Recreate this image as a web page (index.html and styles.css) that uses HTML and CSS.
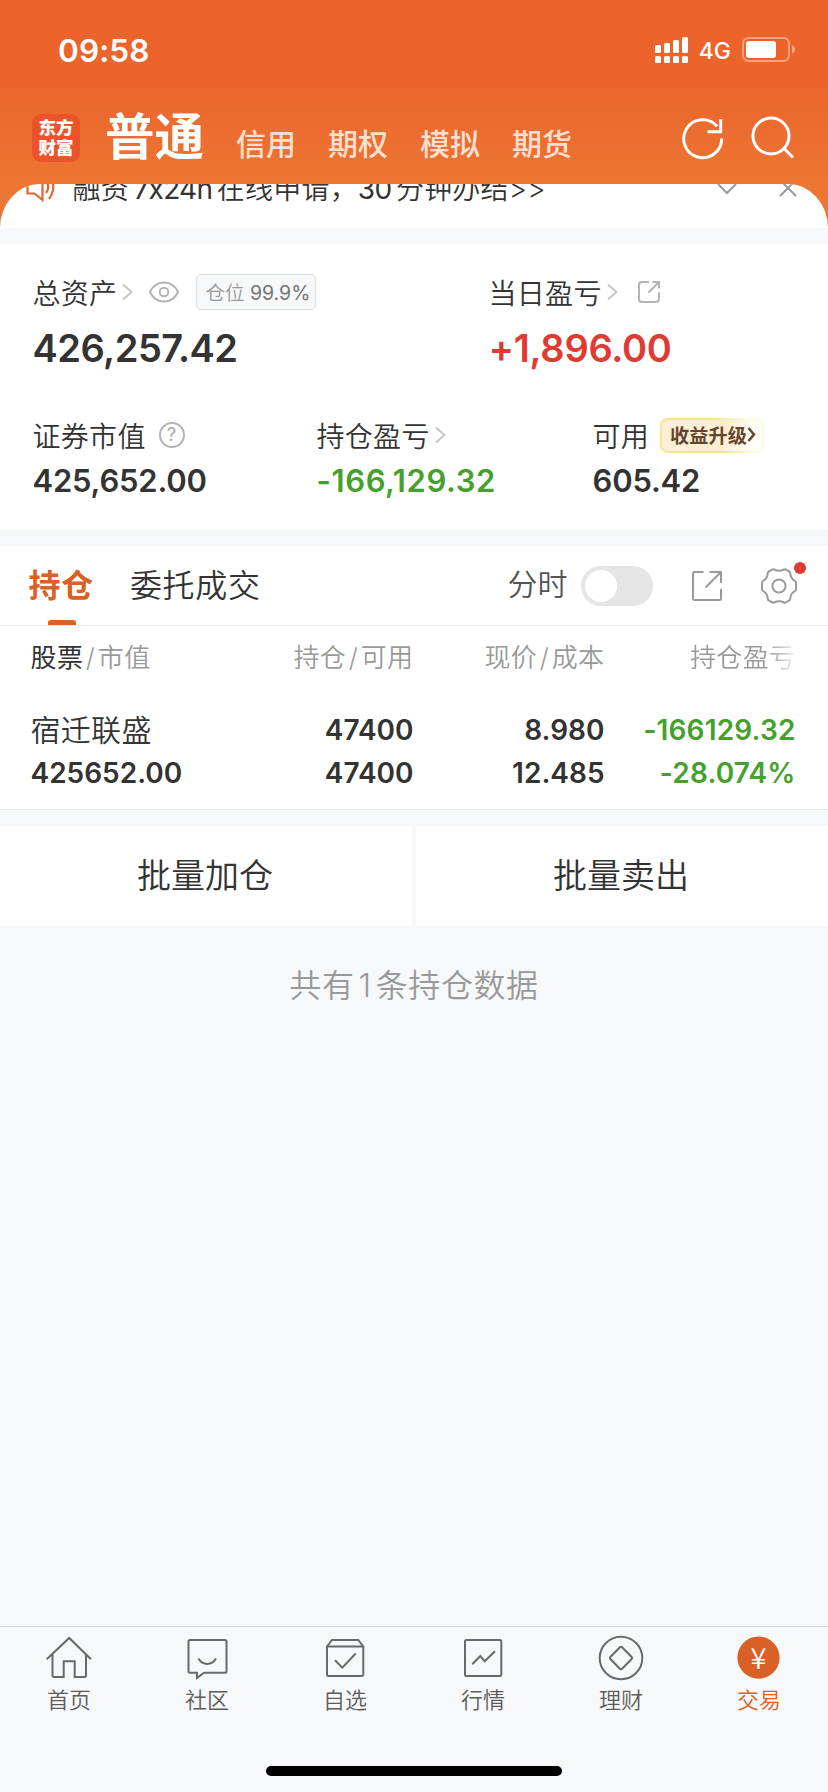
FILE: index.html
```html
<!DOCTYPE html>
<html lang="zh-CN">
<head>
<meta charset="utf-8">
<title>普通交易</title>
<link rel="stylesheet" href="styles.css">
</head>
<body>
<div class="app">
  <header class="header">
    <div class="status">
      <span class="time">09:58</span>
      <div class="status-right">
        <svg class="signal" width="34" height="27" viewBox="0 0 34 27" fill="#fff">
          <rect x="0" y="8" width="6" height="8" rx="1.5"/><rect x="9" y="6" width="6" height="10" rx="1.5"/><rect x="18" y="3" width="6" height="13" rx="1.5"/><rect x="27" y="0" width="6" height="16" rx="1.5"/>
          <rect x="0" y="19" width="6" height="7" rx="1.5"/><rect x="9" y="19" width="6" height="7" rx="1.5"/><rect x="18" y="19" width="6" height="7" rx="1.5"/><rect x="27" y="19" width="6" height="7" rx="1.5"/>
        </svg>
        <span class="network">4G</span>
        <svg width="54" height="26" viewBox="0 0 54 26">
          <rect x="1" y="1" width="46" height="23" rx="5.5" fill="none" stroke="#fff" stroke-opacity=".4" stroke-width="2"/>
          <rect x="4" y="4" width="30" height="17" rx="3" fill="#fff"/>
          <path d="M50 8.5c4 1 4 7 0 8z" fill="#fff" fill-opacity=".45"/>
        </svg>
      </div>
    </div>
    <div class="titlebar">
      <div class="logo"><span>东方</span><span>财富</span></div>
      <nav class="accounts">
        <b class="current">普通</b><span>信用</span><span>期权</span><span>模拟</span><span>期货</span>
      </nav>
      <div class="actions">
        <svg width="46" height="46" viewBox="0 0 46 46" fill="none" stroke="#fff" stroke-width="3"><path d="M41.700 22.500A19 19 0 1 1 37 10.200M40.700 3v12.700H27.500"/></svg>
        <svg width="46" height="46" viewBox="0 0 46 46" fill="none" stroke="#fff" stroke-width="3"><circle cx="20" cy="20" r="18"/><path d="M33 32.5l9 9"/></svg>
      </div>
    </div>
  </header>
  <div class="notice">
    <div class="notice-row">
      <svg class="horn" width="30" height="32" viewBox="0 0 30 32" fill="none" stroke="#e0662f" stroke-width="2.2"><path d="M1.5 10h7L16.5 3v26L8.5 22.500h-7zM20 10q4.500 6 0 12M23 4q8.500 12 0 24"/></svg>
      <span class="notice-text">融资<i class="latin">7x24h</i>在线申请，<i class="latin flush">30</i>分钟办结&gt;&gt;</span>
      <svg class="down" width="20" height="12" viewBox="0 0 20 12" fill="none" stroke="#999" stroke-width="2"><path d="M1 1l9 9 9-9"/></svg>
      <svg width="18" height="18" viewBox="0 0 18 18" fill="none" stroke="#999" stroke-width="2"><path d="M1 1l16 16M17 1L1 17"/></svg>
    </div>
  </div>

  <section class="assets">
    <div class="row main">
      <div class="cell">
        <div class="label"><span>总资产</span>
          <svg class="chev" width="11" height="18" viewBox="0 0 11 18"><path d="M1 1.500L9.500 9 1 16.500"/></svg>
          <svg class="eye" width="32" height="22" viewBox="0 0 32 22" fill="none" stroke="#b4b4b4" stroke-width="2"><path d="M2 11C8 -1.700 24 -1.700 30 11C24 23.700 8 23.700 2 11z"/><circle cx="16" cy="11" r="4.300"/></svg>
          <span class="ratio">仓位 <em>99.9%</em></span>
        </div>
        <div class="value big">426,257.42</div>
      </div>
      <div class="cell">
        <div class="label"><span>当日盈亏</span>
          <svg class="chev" width="11" height="18" viewBox="0 0 11 18"><path d="M1 1.500L9.500 9 1 16.500"/></svg>
          <svg class="share" width="24" height="24" viewBox="0 0 24 24" fill="none" stroke="#b4b4b4" stroke-width="2"><path d="M12 2H5a3 3 0 0 0-3 3v14a3 3 0 0 0 3 3h14a3 3 0 0 0 3-3v-7M15.500 2H22v6.500M22 2L11.500 12.500"/></svg>
        </div>
        <div class="value big up">+1,896.00</div>
      </div>
    </div>
    <div class="row sub">
      <div class="cell">
        <div class="label"><span>证券市值</span><span class="help">?</span></div>
        <div class="value">425,652.00</div>
      </div>
      <div class="cell">
        <div class="label"><span>持仓盈亏</span><svg class="chev" width="11" height="18" viewBox="0 0 11 18"><path d="M1 1.500L9.500 9 1 16.500"/></svg></div>
        <div class="value down-num loose">-166,129.32</div>
      </div>
      <div class="cell">
        <div class="label"><span>可用</span><span class="promo">收益升级<svg width="9" height="15" viewBox="0 0 9 15" fill="none" stroke="#65452e" stroke-width="2.500"><path d="M1.500 1L7 7.500 1.500 14"/></svg></span></div>
        <div class="value">605.42</div>
      </div>
    </div>
  </section>

  <section class="holdings">
    <div class="tabs">
      <span class="tab on">持仓</span>
      <span class="tab">委托成交</span>
      <div class="tools">
        <span class="minute">分时</span>
        <span class="switch"></span>
        <svg class="export" width="32" height="32" viewBox="0 0 32 32" fill="none" stroke="#999" stroke-width="2"><path d="M12.500 2H3.500A1.500 1.500 0 0 0 2 3.500v25A1.500 1.500 0 0 0 3.500 30h25a1.500 1.500 0 0 0 1.500-1.500V19M18.500 2H30v11M30 2L14.500 17.500"/></svg>
        <span class="gear">
          <svg width="38" height="38" viewBox="0 0 38 38" fill="none" stroke="#999" stroke-width="2" stroke-linejoin="round"><path d="M8.700 4.700L12.600 2.400Q13.500 1.900 14.400 2.600Q19 5 23.600 2.600Q24.500 1.900 25.400 2.400L29.300 4.700Q30.200 5.300 30.200 6.300Q30.500 11.500 35 14Q36 14.700 36 15.700V22.300Q36 23.300 35 24Q30.500 26.500 30.200 31.700Q30.200 32.700 29.300 33.300L25.400 35.600Q24.500 36.100 23.600 35.400Q19 33 14.400 35.400Q13.500 36.100 12.600 35.600L8.700 33.300Q7.800 32.700 7.800 31.700Q7.500 26.500 3 24Q2 23.300 2 22.300V15.700Q2 14.700 3 14Q7.500 11.500 7.800 6.300Q7.800 5.300 8.700 4.700Z"/><circle cx="19" cy="19" r="6.600"/></svg>
          <i class="dot"></i>
        </span>
      </div>
    </div>
    <div class="table head">
      <span><b>股票</b><s>/</s>市值</span><span>持仓<s>/</s>可用</span><span>现价<s>/</s>成本</span><span class="fade">持仓盈亏</span>
    </div>
    <div class="table body">
      <span class="name">宿迁联盛</span><span>47400</span><span>8.980</span><span class="down-num">-166129.32</span>
      <span>425652.00</span><span>47400</span><span>12.485</span><span class="down-num">-28.074%</span>
    </div>
  </section>

  <div class="batch"><span>批量加仓</span><span>批量卖出</span></div>
  <p class="summary">共有<i class="num">1</i>条持仓数据</p>

  <footer class="tabbar">
    <nav class="nav">
      <div class="item"><svg width="48" height="48" viewBox="0 0 48 48"><path d="M1.700 26.300L24.200 5 46 26.300M7.500 21.500V42.500a1.500 1.500 0 0 0 1.500 1.500h9.700V28.200h11V44h9.800a1.500 1.500 0 0 0 1.500-1.500V21.500"/></svg><span>首页</span></div>
      <div class="item"><svg width="48" height="48" viewBox="0 0 48 48"><path d="M7 7h35a1.500 1.500 0 0 1 1.500 1.500v29.700a1.500 1.500 0 0 1-1.500 1.500H21l-7 5.300v-5.300H7a1.500 1.500 0 0 1-1.500-1.500V8.500A1.500 1.500 0 0 1 7 7zM15.400 25.500c4.300 7.200 13.300 7.200 17.600 0"/></svg><span>社区</span></div>
      <div class="item"><svg width="48" height="48" viewBox="0 0 48 48"><path d="M6 13.500h36.300V41.500a1.500 1.500 0 0 1-1.500 1.500H7.500A1.500 1.500 0 0 1 6 41.500zL11 7H37.300L42.300 13.500M14 27.300l7.300 7.300L34.700 20.500"/></svg><span>自选</span></div>
      <div class="item"><svg width="48" height="48" viewBox="0 0 48 48"><rect x="6" y="7" width="36.300" height="36" rx="1.500"/><path d="M13.300 31.300L21.300 23l4.400 5.300L36 18.300"/></svg><span>行情</span></div>
      <div class="item"><svg width="48" height="48" viewBox="0 0 48 48"><circle cx="24" cy="25" r="21.300"/><rect x="15.700" y="16.700" width="16.600" height="16.600" rx="1.500" transform="rotate(45 24 25)"/></svg><span>理财</span></div>
      <div class="item active"><svg width="48" height="48" viewBox="0 0 48 48"><circle class="coin" cx="23.500" cy="24.600" r="21.100"/><text x="23.500" y="35.500" text-anchor="middle">¥</text></svg><span>交易</span></div>
    </nav>
    <div class="home-indicator"></div>
  </footer>
</div>
</body>
</html>
```
FILE: styles.css
```css
* { box-sizing: border-box; }
body {
  margin: 0;
  font-family: Inter, "Noto Sans CJK SC", sans-serif;
  color: #333;
  background: #f7f8fa;
}
i, em { font-style: normal; }
s { text-decoration: none; }
svg { flex: none; display: block; }
.app { width: 828px; height: 1792px; display: flex; flex-direction: column; overflow: hidden; }

.header {
  height: 184px;
  flex: none;
  color: #fff;
  background: linear-gradient(#ec632b 0, #ec632b 74px, #ec7633 184px);
}
.status { height: 100px; padding: 0 32px 0 58px; display: flex; align-items: center; justify-content: space-between; }
.time { font-size: 31.500px; font-weight: 600; letter-spacing: .1px; }
.status-right { display: flex; align-items: center; }
.network { font-size: 23px; font-weight: 500; margin: 2px 11px 0 10px; }
.titlebar { height: 84px; padding: 0 31px 0 32px; display: flex; align-items: flex-start; }
.logo {
  width: 48px; height: 48px; margin-top: 14px; border-radius: 9px; background: #ec532a;
  display: flex; flex-direction: column; align-items: center; justify-content: center;
  font-size: 17.5px; font-weight: 900; line-height: 20px;
}
.accounts { display: flex; align-items: baseline; margin-left: 25px; font-size: 30px; font-weight: 500; line-height: 75px; }
.accounts span { margin-left: 32px; color: rgba(255,255,255,.8); }
.current { font-size: 49.500px; font-weight: 600; }
.actions { margin-left: auto; margin-top: 16px; display: flex; gap: 25px; }

.notice { flex: none; height: 44px; background: #ec7634; overflow: hidden; }
.notice-row {
  height: 44px; padding-left: 26px; background: #fff; overflow: hidden;
  border-radius: 40px 40px 0 0 / 44px 44px 0 0;
  display: flex; align-items: flex-start;
}
.horn { margin-top: -13px; }
.notice-text { margin: -16px 0 0 16.500px; font-size: 28px; font-weight: 350; line-height: 42px; width: 480px; letter-spacing: .2px; white-space: nowrap; }
.latin { margin: 0 4.500px; font-weight: 400; letter-spacing: -.7px; }
.flush { margin-left: 0; }
.down { margin: -1px 42px 0 164px; }
.notice-row svg:last-child { margin-top: -5px; }

.assets { flex: none; margin-top: 16px; height: 286px; background: #fff; padding: 24px 33px 0 32.500px; }
.row { display: grid; }
.main { grid-template-columns: 456px 1fr; height: 143px; }
.sub { grid-template-columns: 284px 276px 1fr; }
.label { display: flex; align-items: center; height: 48px; font-size: 28px; letter-spacing: .3px; font-weight: 350; white-space: nowrap; }
.chev { margin-left: 5px; fill: none; stroke: #c6c6c6; stroke-width: 2; }
.eye { margin-left: 15px; }
.share { margin-left: 19px; }
.ratio {
  margin-left: 16px; height: 36px; padding: 0 5px 0 8px; border: 1px solid #dedfe2; border-radius: 5px;
  background: #f7f8fa; color: #999; font-size: 19.500px; line-height: 36px; letter-spacing: 0;
}
.ratio em { color: #737373; font-weight: 400; font-size: 19.500px; }
.value { font-size: 31px; font-weight: 600; line-height: 44px; letter-spacing: -.2px; }
.big { font-size: 38px; line-height: 64px; letter-spacing: -.5px; }
.loose { letter-spacing: .6px; }
.up { color: #df3b33; letter-spacing: -.3px; }
.down-num { color: #45a02c; }
.help {
  width: 26px; height: 26px; margin-left: 13px; border: 2px solid #b4b4b4; border-radius: 50%;
  color: #b0b0b0; font-size: 18px; font-weight: 500; line-height: 22px; text-align: center;
}
.promo {
  height: 35px; margin-left: 11px; padding: 0 6px 1px 8px; display: flex; align-items: center;
  border: 2px solid transparent; border-radius: 8px;
  background: linear-gradient(100deg, #fbf0d8, #faedcf 60%, #fffdf6 88%) padding-box, linear-gradient(75deg, #fae48b 55%, #fffbe2 85%) border-box;
  color: #65452e; font-size: 19.200px; font-weight: 700; letter-spacing: 0;
}

.holdings { flex: none; margin-top: 16px; height: 264px; background: #fff; border-bottom: 1px solid #e9eaec; }
.tabs { height: 80px; border-bottom: 1px solid #ebebeb; display: flex; align-items: center; padding: 0 30.500px 0 28.500px; }
.tab { position: relative; font-size: 32px; letter-spacing: .7px; font-weight: 350; line-height: 79px; margin-right: 36px; }
.on { color: #d96027; font-weight: 700; }
.on::after { content: ""; position: absolute; left: 19px; bottom: 0; width: 28px; height: 5px; background: #d96027; border-radius: 3px 3px 0 0; }
.tools { margin-left: auto; display: flex; align-items: center; }
.minute { font-size: 30px; font-weight: 350; color: #555; line-height: 40px; padding-bottom: 3px; }
.switch { width: 72px; height: 40px; margin-left: 13px; padding: 4px; border-radius: 20px; background: #e5e5e5; }
.switch::before { content: ""; display: block; width: 32px; height: 32px; border-radius: 50%; background: #fff; }
.export { margin-left: 38px; }
.gear { position: relative; margin-left: 37px; }
.dot { position: absolute; right: -8px; top: -5px; width: 12px; height: 12px; border-radius: 50%; background: #df3b33; }
.table { display: grid; grid-template-columns: 192px 191px 191px 191px; padding-left: 30.500px; text-align: right; white-space: nowrap; }
.table span:nth-child(4n+1) { text-align: left; }
.head { font-size: 26px; color: #999; line-height: 64px; font-weight: 350; letter-spacing: .4px; }
.head b { color: #333; font-weight: 400; }
.head s { margin: 0 2.500px; }
.fade { background: linear-gradient(90deg, #999 84%, #eee 100%); -webkit-background-clip: text; background-clip: text; color: transparent; }
.body { font-size: 28px; font-weight: 600; line-height: 43px; margin-top: 19px; }
.body .down-num { letter-spacing: .15px; }
.body .name { font-size: 30px; font-weight: 350; letter-spacing: .3px; }

.batch { flex: none; margin-top: 16px; height: 100px; display: grid; grid-template-columns: 1fr 1fr; gap: 4px; }
.batch span { background: #fff; text-align: center; font-size: 34px; font-weight: 350; line-height: 100px; padding-right: 2px; }
.summary { margin: 35px 0 0; text-align: center; font-size: 32px; line-height: 50px; color: #999; font-weight: 350; letter-spacing: .6px; }
.num { margin: 0 4px; }

.tabbar { margin-top: auto; flex: none; height: 166px; border-top: 1px solid #d1d2dc; background: #f7f8fa; }
.nav { height: 139px; display: grid; grid-template-columns: repeat(6, 1fr); }
.item { display: flex; flex-direction: column; align-items: center; padding-top: 6px; font-size: 22px; font-weight: 350; line-height: 36px; color: #5c5c5c; }
.item span { margin-top: 1px; }
.item svg { fill: none; stroke: #696969; stroke-width: 2; }
.item.active { color: #d96027; }
.item .coin { fill: #d96027; stroke: none; }
.item text { fill: #fff; stroke: none; font-family: "Noto Sans CJK SC", sans-serif; font-size: 29px; font-weight: 350; }
.home-indicator { width: 296px; height: 10px; margin: 0 auto; border-radius: 5px; background: #000; }
```
